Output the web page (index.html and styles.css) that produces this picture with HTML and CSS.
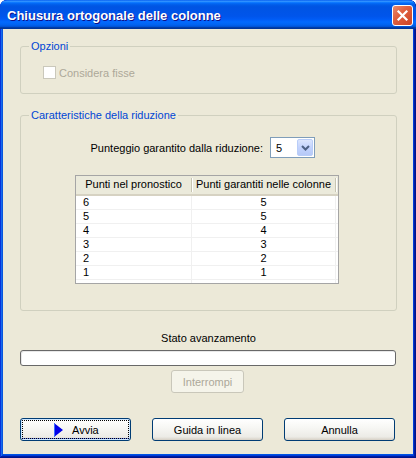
FILE: index.html
```html
<!DOCTYPE html>
<html>
<head>
<meta charset="utf-8">
<link rel="stylesheet" href="styles.css">
</head>
<body>
<div class="window">
  <div class="titlebar">
    <span class="title">Chiusura ortogonale delle colonne</span>
    <span class="close"><svg width="21" height="21" viewBox="0 0 21 21"><path d="M6.5 6.5 L14.5 14.5 M14.5 6.5 L6.5 14.5" stroke="#fff" stroke-width="2.2" stroke-linecap="square"/></svg></span>
  </div>
  <div class="client">
    <div class="group g1">
      <span class="legend">Opzioni</span>
      <label class="check"><span class="box"></span><span class="check-text">Considera fisse</span></label>
    </div>
    <div class="group g2">
      <span class="legend">Caratteristiche della riduzione</span>
      <div class="score-row">
        <span class="score-label">Punteggio garantito dalla riduzione:</span>
        <div class="combo">
          <span class="combo-val">5</span>
          <span class="combo-btn"><svg width="9" height="6" viewBox="0 0 9 6"><path d="M1 1 L4.5 4.5 L8 1" fill="none" stroke="#4D6185" stroke-width="2"/></svg></span>
        </div>
      </div>
      <div class="listview">
        <div class="lv-head">
          <div class="lv-h c1">Punti nel pronostico</div>
          <div class="lv-h c2">Punti garantiti nelle colonne</div>
          <div class="lv-h c3"></div>
        </div>
        <div class="lv-body">
          <div class="lv-row"><span class="c1">6</span><span class="c2">5</span></div>
          <div class="lv-row"><span class="c1">5</span><span class="c2">5</span></div>
          <div class="lv-row"><span class="c1">4</span><span class="c2">4</span></div>
          <div class="lv-row"><span class="c1">3</span><span class="c2">3</span></div>
          <div class="lv-row"><span class="c1">2</span><span class="c2">2</span></div>
          <div class="lv-row"><span class="c1">1</span><span class="c2">1</span></div>
          <div class="lv-row lv-rest"><span class="c1"></span><span class="c2"></span></div>
        </div>
      </div>
    </div>
    <div class="progress-label">Stato avanzamento</div>
    <div class="progress"></div>
    <div class="btn disabled stop">Interrompi</div>
    <div class="buttons">
      <div class="btn default"><svg class="play" width="9" height="14" viewBox="0 0 9 14"><path d="M0 0 L9 7 L0 14 Z" fill="#0000E8"/><path d="M0.5 0 L0.5 14" stroke="#3C6CFF" stroke-width="1"/></svg><span>Avvia</span></div>
      <div class="btn">Guida in linea</div>
      <div class="btn">Annulla</div>
    </div>
  </div>
</div>
</body>
</html>
```
FILE: styles.css
```css
* { box-sizing: border-box; }
html, body { margin: 0; padding: 0; background: #fff; }
body {
  font-family: "Liberation Sans", Arial, sans-serif;
  font-size: 11px;
  color: #000;
}
.window {
  width: 416px;
  height: 458px;
  display: flex;
  flex-direction: column;
  background: #0054E3;
  border-radius: 7px 7px 0 0;
  padding: 0 3px 4px 3px;
  box-shadow: inset -1px -1px #00138c, inset 1px 1px #0831d9, inset -2px -2px #001ea0, inset 2px 2px #166aee, inset -3px -3px #003bda, inset 3px 3px #0855dd;
  overflow: hidden;
}
.titlebar {
  height: 29px;
  margin: 0 -3px;
  padding: 0 3px 0 7px;
  display: flex;
  align-items: center;
  justify-content: space-between;
  border-radius: 7px 7px 0 0;
  background: linear-gradient(to bottom, #0058EE 0%, #3593FF 4%, #288EFF 6%, #127DFF 8%, #036FFC 10%, #0262EE 14%, #0057E5 20%, #0054E3 24%, #0055EB 56%, #005BF5 66%, #026AFE 76%, #0062EF 86%, #0052D6 92%, #0040AB 94%, #003092 100%);
}
.title {
  color: #fff;
  font-weight: bold;
  font-size: 13px;
  text-shadow: 1px 1px #0F1089;
  padding-top: 1px;
}
.close {
  width: 21px;
  height: 21px;
  border: 1px solid #fff;
  border-radius: 3px;
  background: linear-gradient(135deg, #E98B6E 0%, #E0603F 40%, #CC4327 100%);
  display: flex;
  align-items: center;
  justify-content: center;
  margin-top: 2px;
}
.close svg { display: block; margin: -1px; }
.client {
  flex: 1;
  background: #ECE9D8;
  padding: 0 16px 0 17px;
  display: flex;
  flex-direction: column;
}
.group {
  border: 1px solid #D0D0BF;
  border-radius: 3px;
  display: flex;
  flex-direction: column;
  align-items: flex-start;
}
.legend {
  display: block;
  height: 13px;
  line-height: 13px;
  margin: -7px 0 0 8px;
  padding: 0 2px;
  background: #ECE9D8;
  color: #0046D5;
}
.g1 {
  margin-top: 17px;
  padding-bottom: 14px;
}
.check {
  display: flex;
  align-items: center;
  margin: 13px 0 0 22px;
  height: 13px;
}
.box {
  width: 13px;
  height: 13px;
  border: 1px solid #CAC8BB;
  background: #fff;
}
.check-text {
  margin-left: 3px;
  color: #ACA899;
}
.g2 {
  margin-top: 21px;
  padding-bottom: 26px;
}
.score-row {
  align-self: stretch;
  display: flex;
  justify-content: flex-end;
  align-items: center;
  margin-top: 15px;
  padding-right: 81px;
  gap: 7px;
}
.combo {
  width: 45px;
  height: 21px;
  border: 1px solid #7F9DB9;
  background: #fff;
  display: flex;
  align-items: center;
  justify-content: space-between;
  padding: 1px;
}
.combo-val { padding-left: 4px; }
.combo-btn {
  width: 16px;
  height: 17px;
  border-radius: 2px;
  border: 1px solid #B9CDF8;
  background: linear-gradient(to bottom, #DCE6FD 0%, #C3D3FD 50%, #B6C9F7 100%);
  display: flex;
  align-items: center;
  justify-content: center;
}
.combo-btn svg { display: block; }
.listview {
  margin: 17px 0 0 54px;
  width: 264px;
  height: 109px;
  border: 1px solid #A5A5A5;
  background: #fff;
  display: flex;
  flex-direction: column;
  overflow: hidden;
}
.lv-head {
  display: flex;
  height: 20px;
  background: #EBEADB;
  border-bottom: 2px solid #D6D2C2;
}
.lv-h {
  height: 18px;
  line-height: 17px;
  text-align: center;
  white-space: nowrap;
}
.lv-h.c1, .lv-row .c1 { width: 116px; }
.lv-h.c2, .lv-row .c2 { width: 144px; }
.lv-h.c3 { flex: 1; }
.lv-h.c1, .lv-h.c2 { border-right: 1px solid #C7C5B2; box-shadow: 1px 0 #fff; height: 14px; margin-top: 2px; line-height: 13px; }
.lv-body {
  flex: 1;
  display: flex;
  flex-direction: column;
}
.lv-row {
  display: flex;
  height: 14px;
  line-height: 13px;
  border-bottom: 1px solid #F0F0F0;
}
.lv-row .c1 {
  padding-left: 7px;
  border-right: 1px solid #F0F0F0;
}
.lv-row .c2 {
  text-align: center;
  border-right: 1px solid #F0F0F0;
}
.lv-rest { flex: 1; border-bottom: 0; }
.progress-label {
  margin-top: 21px;
  height: 13px;
  line-height: 13px;
  text-align: center;
}
.progress {
  margin-top: 5px;
  width: 376px;
  height: 16px;
  border: 1px solid #686868;
  border-radius: 3px;
  background: #fff;
  box-shadow: inset 1px 1px #E8E8E8;
}
.btn {
  width: 111px;
  height: 23px;
  border: 1px solid #003C74;
  border-radius: 3px;
  background: linear-gradient(to bottom, #FFFFFF 0%, #F7F7F4 40%, #ECEBE6 85%, #D6D0C5 100%);
  display: flex;
  align-items: center;
  justify-content: center;
  position: relative;
  white-space: nowrap;
}
.btn.disabled {
  border-color: #C9C7BA;
  background: #F5F4EA;
  color: #ACA899;
}
.stop {
  width: 73px;
  margin: 4px 0 0 151px;
}
.buttons {
  margin-top: 25px;
  display: flex;
  gap: 21px;
}
.btn.default {
  box-shadow: inset 0 0 0 1px #CEE7FF, inset 0 -1px 0 1px #6982EE;
  justify-content: flex-start;
}
.btn.default::after {
  content: "";
  position: absolute;
  left: 1px; top: 1px; right: 1px; bottom: 1px;
  border: 1px dotted #000;
}
.play { display: block; margin-left: 33px; }
.btn.default span { margin-left: 9px; }
```
